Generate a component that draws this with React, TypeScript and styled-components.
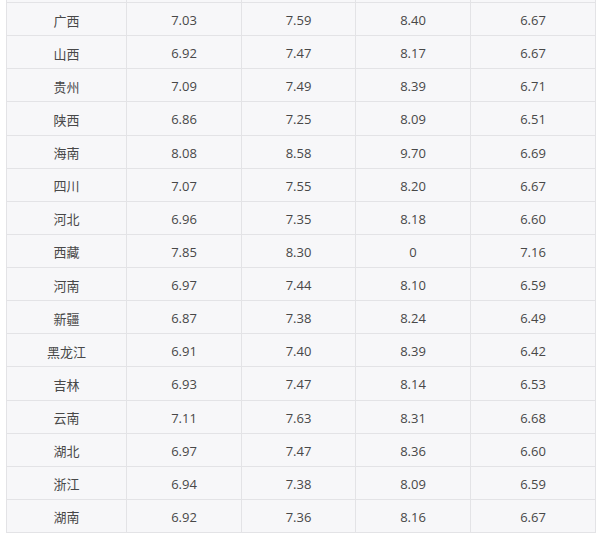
import React from 'react';
import styled, { createGlobalStyle } from 'styled-components';

const GlobalStyle = createGlobalStyle`
  body {
    margin: 0;
    background: #ffffff;
    font-family: "Open Sans", "Noto Sans CJK SC", sans-serif;
  }
`;

const Wrap = styled.div`
  padding-left: 6px;
  width: 590px;
`;

const Row = styled.div<{ $h: string }>`
  display: grid;
  grid-template-columns: 120px 115px 114px 115px 126px;
  height: ${(p) => p.$h};
  border-bottom: 1px solid #e3e3e6;
  background: #f7f7f9;
`;

const Cell = styled.div`
  display: flex;
  align-items: center;
  justify-content: center;
  padding-top: 2px;
  border-left: 1px solid #e3e3e6;
  font-size: 13px;
  color: #484848;
  overflow: hidden;
  &:last-child {
    border-right: 1px solid #e3e3e6;
  }
`;

const rows: [string, string, string, string, string][] = [
  ['广西', '7.03', '7.59', '8.40', '6.67'],
  ['山西', '6.92', '7.47', '8.17', '6.67'],
  ['贵州', '7.09', '7.49', '8.39', '6.71'],
  ['陕西', '6.86', '7.25', '8.09', '6.51'],
  ['海南', '8.08', '8.58', '9.70', '6.69'],
  ['四川', '7.07', '7.55', '8.20', '6.67'],
  ['河北', '6.96', '7.35', '8.18', '6.60'],
  ['西藏', '7.85', '8.30', '0', '7.16'],
  ['河南', '6.97', '7.44', '8.10', '6.59'],
  ['新疆', '6.87', '7.38', '8.24', '6.49'],
  ['黑龙江', '6.91', '7.40', '8.39', '6.42'],
  ['吉林', '6.93', '7.47', '8.14', '6.53'],
  ['云南', '7.11', '7.63', '8.31', '6.68'],
  ['湖北', '6.97', '7.47', '8.36', '6.60'],
  ['浙江', '6.94', '7.38', '8.09', '6.59'],
  ['湖南', '6.92', '7.36', '8.16', '6.67'],
];

export default function App() {
  return (
    <>
      <GlobalStyle />
      <Wrap>
        <Row $h="2px">
          {[0, 1, 2, 3, 4].map((i) => (
            <Cell key={i} />
          ))}
        </Row>
        {rows.map((r) => (
          <Row $h="32.125px" key={r[0]}>
            {r.map((v, i) => (
              <Cell key={i}>{v}</Cell>
            ))}
          </Row>
        ))}
      </Wrap>
    </>
  );
}
